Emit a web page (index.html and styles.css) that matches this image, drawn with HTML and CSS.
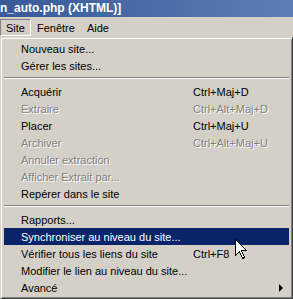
FILE: index.html
```html
<!DOCTYPE html>
<html>
<head>
<meta charset="utf-8">
<link rel="stylesheet" href="styles.css">
</head>
<body>
<div class="titlebar"><span class="title">n_auto.php (XHTML)]</span></div>
<div class="menubar">
  <span class="mb-item pressed">Site</span>
  <span class="mb-item">Fenêtre</span>
  <span class="mb-item">Aide</span>
</div>
<div class="popup">
  <div class="item"><span>Nouveau site...</span></div>
  <div class="item"><span>Gérer les sites...</span></div>
  <div class="sep"></div>
  <div class="item"><span>Acquérir</span><span>Ctrl+Maj+D</span></div>
  <div class="item disabled"><span>Extraire</span><span>Ctrl+Alt+Maj+D</span></div>
  <div class="item"><span>Placer</span><span>Ctrl+Maj+U</span></div>
  <div class="item disabled"><span>Archiver</span><span>Ctrl+Alt+Maj+U</span></div>
  <div class="item disabled"><span>Annuler extraction</span></div>
  <div class="item disabled"><span>Afficher Extrait par...</span></div>
  <div class="item"><span>Repérer dans le site</span></div>
  <div class="sep"></div>
  <div class="item"><span>Rapports...</span></div>
  <div class="item active"><span>Synchroniser au niveau du site...</span></div>
  <div class="item"><span>Vérifier tous les liens du site</span><span>Ctrl+F8</span></div>
  <div class="item"><span>Modifier le lien au niveau du site...</span></div>
  <div class="item sub"><span>Avancé</span><span class="arrow"></span></div>
</div>
<svg class="cursor" width="13" height="21" viewBox="0 0 13 21">
  <path d="M0.5 0.5 L0.5 16.5 L4.5 12.5 L7.5 19.5 L9.5 18.5 L6.5 11.5 L11.5 11.5 Z" fill="#fff" stroke="#000" stroke-width="1" shape-rendering="crispEdges"/>
</svg>
</body>
</html>
```

FILE: styles.css
```css
html, body {
  margin: 0;
  padding: 0;
}
body {
  width: 293px;
  height: 299px;
  overflow: hidden;
  background: #d4d0c8;
  font-family: "Liberation Sans", Arial, sans-serif;
  font-size: 11px;
  color: #000;
  position: relative;
}
.titlebar {
  height: 17px;
  background: linear-gradient(to right, #385a98, #5b7fb8);
  display: flex;
  align-items: center;
}
.title {
  color: #fff;
  font-weight: bold;
  font-size: 12px;
  line-height: 17px;
}
.menubar {
  height: 20px;
  display: flex;
  align-items: center;
  box-sizing: border-box;
  padding-top: 1px;
}
.mb-item {
  height: 17px;
  line-height: 16px;
  padding: 0 5px;
  box-sizing: border-box;
  border: 1px solid transparent;
}
.mb-item.pressed {
  border-color: #808080 #fff #fff #808080;
}
.popup {
  height: 262px;
  box-sizing: border-box;
  border: 1px solid;
  border-color: #d4d0c8 #404040 #404040 #d4d0c8;
  box-shadow: inset 1px 1px 0 #fff, inset -1px -1px 0 #808080;
  padding: 2px 3px;
}
.item {
  height: 17px;
  display: grid;
  grid-template-columns: 172px 1fr;
  align-items: center;
  padding-left: 17px;
  white-space: nowrap;
}
.item.disabled {
  color: #808080;
  text-shadow: 1px 1px 0 #fff;
}
.item.active {
  background: #0a246a;
  color: #fff;
}
.sep {
  height: 9px;
  box-sizing: border-box;
  padding-top: 3px;
}
.sep::before {
  content: "";
  display: block;
  height: 1px;
  background: #808080;
  border-bottom: 1px solid #fff;
}
.arrow {
  justify-self: end;
  margin-right: 6px;
  width: 0;
  height: 0;
  border-left: 4px solid #000;
  border-top: 4px solid transparent;
  border-bottom: 4px solid transparent;
}
.cursor {
  position: absolute;
  left: 235px;
  top: 239px;
}
```
